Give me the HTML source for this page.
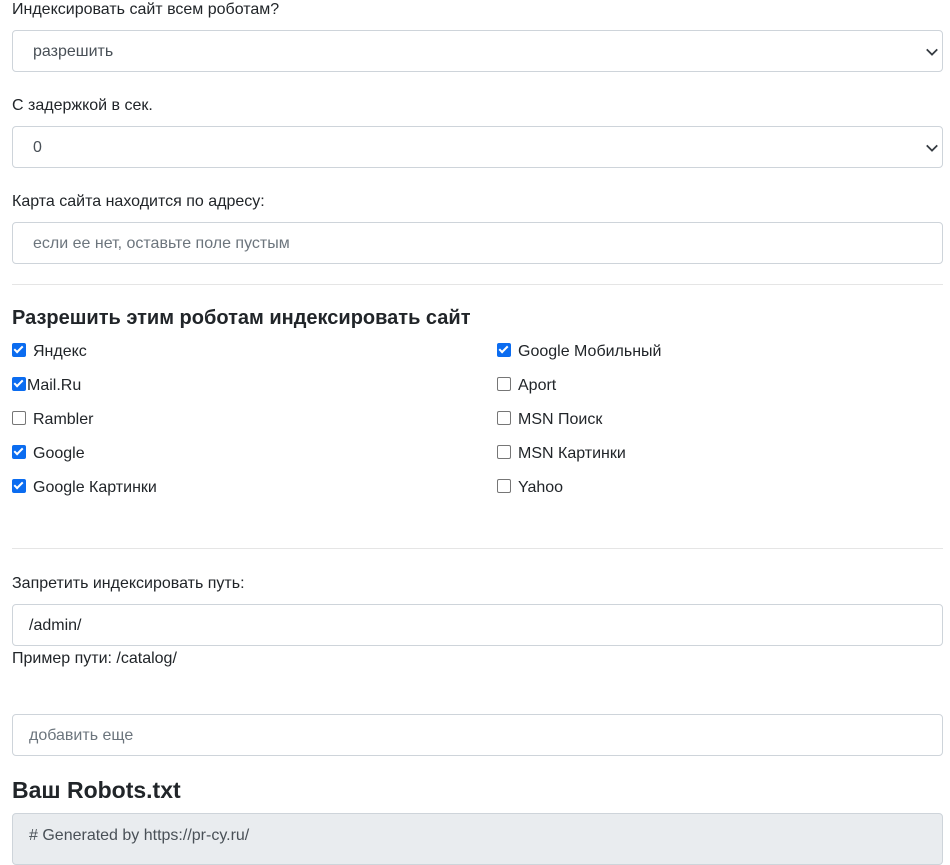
<!DOCTYPE html>
<html><head><meta charset="utf-8"><style>
body{margin:0;width:950px;height:849px;overflow:hidden;background:#fff;font-family:"Liberation Sans",Arial,sans-serif;color:#212529;font-size:16px;position:relative}
.a{position:absolute}
.lbl{left:12px;line-height:20px}
.box{left:12px;width:929px;height:40px;border:1px solid #ced4da;border-radius:4px;line-height:42px;box-sizing:content-box}
.box span{margin-left:20px;color:#495057}
.ph{color:#6c757d!important}
.chev{position:absolute;right:3px;top:14px}
hr{position:absolute;left:12px;width:931px;margin:0;border:0;border-top:1px solid #e5e5e5}
.cb{position:absolute;line-height:20px}
.cb i{display:inline-block;width:14px;height:14px;border-radius:2px;vertical-align:-1px;margin-right:7px;box-sizing:border-box}
.on{background:#0b6cf0;position:relative}
.off{border:1px solid #767676;background:#fff}
.on:after{content:"";position:absolute;left:4px;top:1px;width:3px;height:7px;border:solid #fff;border-width:0 2px 2px 0;transform:rotate(45deg)}
h3{position:absolute;left:12px;margin:0;font-weight:bold}
</style></head><body>
<div class="a lbl" style="top:0px">Индексировать сайт всем роботам?</div>
<div class="a box" style="top:30px"><span>разрешить</span><svg class="chev" width="14" height="14" viewBox="0 0 16 16"><path d="M2 5l6 6 6-6" fill="none" stroke="#343a40" stroke-width="2"/></svg></div>
<div class="a lbl" style="top:96px">С задержкой в сек.</div>
<div class="a box" style="top:126px"><span>0</span><svg class="chev" width="14" height="14" viewBox="0 0 16 16"><path d="M2 5l6 6 6-6" fill="none" stroke="#343a40" stroke-width="2"/></svg></div>
<div class="a lbl" style="top:192px">Карта сайта находится по адресу:</div>
<div class="a box" style="top:222px"><span class="ph">если ее нет, оставьте поле пустым</span></div>
<hr style="top:284px">
<h3 style="top:307px;font-size:20px">Разрешить этим роботам индексировать сайт</h3>
<div class="cb" style="left:12px;top:342px"><i class="on"></i>Яндекс</div>
<div class="cb" style="left:12px;top:376px"><i class="on" style="margin-right:1px"></i>Mail.Ru</div>
<div class="cb" style="left:12px;top:410px"><i class="off"></i>Rambler</div>
<div class="cb" style="left:12px;top:444px"><i class="on"></i>Google</div>
<div class="cb" style="left:12px;top:478px"><i class="on"></i>Google Картинки</div>
<div class="cb" style="left:497px;top:342px"><i class="on"></i>Google Мобильный</div>
<div class="cb" style="left:497px;top:376px"><i class="off"></i>Aport</div>
<div class="cb" style="left:497px;top:410px"><i class="off"></i>MSN Поиск</div>
<div class="cb" style="left:497px;top:444px"><i class="off"></i>MSN Картинки</div>
<div class="cb" style="left:497px;top:478px"><i class="off"></i>Yahoo</div>
<hr style="top:548px">
<div class="a lbl" style="top:574px">Запретить индексировать путь:</div>
<div class="a box" style="top:604px"><span style="color:#212529;margin-left:16px">/admin/</span></div>
<div class="a lbl" style="top:649px">Пример пути: /catalog/</div>
<div class="a box" style="top:714px"><span class="ph" style="margin-left:16px">добавить еще</span></div>
<h3 style="top:777px;font-size:23px">Ваш Robots.txt</h3>
<div class="a" style="left:12px;top:813px;width:929px;height:50px;border:1px solid #ced4da;border-radius:4px;background:#e9ecef;line-height:44px"><span style="margin-left:16px;color:#495057">#&nbsp;Generated by https://pr-cy.ru/</span></div>
</body></html>
